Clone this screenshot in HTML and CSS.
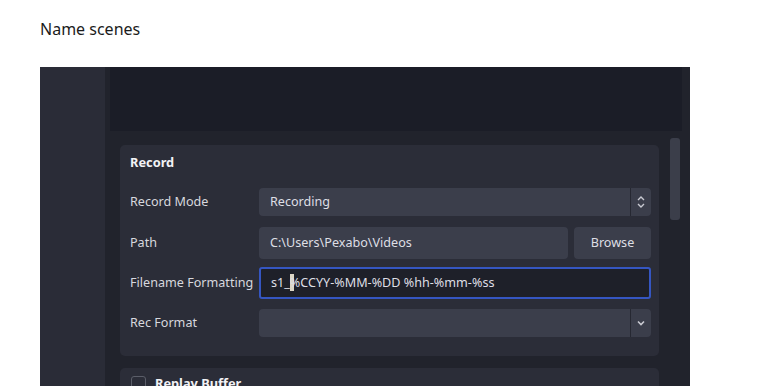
FILE: index.html
```html
<!DOCTYPE html>
<html>
<head>
<meta charset="utf-8">
<link rel="stylesheet" href="styles.css">
</head>
<body>
<div class="header"><h1 class="title">Name scenes</h1></div>
<div class="frame">
  <div class="sidebar"></div>
  <div class="main">
    <div class="toppanel"></div>
    <div class="lower">
      <div class="scroll-content">
        <div class="card">
          <div class="card-title">Record</div>
          <div class="rows">
            <div class="row first">
              <div class="label">Record Mode</div>
              <div class="select">
                <span class="select-text">Recording</span>
                <span class="select-btn">
                  <svg width="10" height="16" viewBox="0 0 10 16"><path d="M2 6 L5 3 L8 6" fill="none" stroke="#c9cad2" stroke-width="1.4"/><path d="M2 10 L5 13 L8 10" fill="none" stroke="#c9cad2" stroke-width="1.4"/></svg>
                </span>
              </div>
            </div>
            <div class="row">
              <div class="label">Path</div>
              <div class="path-group">
                <div class="input">C:\Users\Pexabo\Videos</div>
                <div class="button">Browse</div>
              </div>
            </div>
            <div class="row">
              <div class="label">Filename Formatting</div>
              <div class="input focused">s1_<span class="caret">%</span>CCYY-%MM-%DD %hh-%mm-%ss</div>
            </div>
            <div class="row">
              <div class="label">Rec Format</div>
              <div class="select">
                <span class="select-text"></span>
                <span class="select-btn">
                  <svg width="10" height="10" viewBox="0 0 10 10"><path d="M2 3.5 L5 6.5 L8 3.5" fill="none" stroke="#c9cad2" stroke-width="1.6"/></svg>
                </span>
              </div>
            </div>
          </div>
        </div>
        <div class="card card2">
          <span class="checkbox"></span>
          <span class="card-title inline">Replay Buffer</span>
        </div>
      </div>
      <div class="scroll-track"><div class="scroll-thumb"></div></div>
    </div>
  </div>
</div>
</body>
</html>
```
FILE: styles.css
```css
html, body {
  margin: 0;
  padding: 0;
  background: #ffffff;
  font-family: "Noto Sans", "Open Sans", sans-serif;
  overflow: hidden;
}
.header {
  height: 67px;
  box-sizing: border-box;
  padding: 18px 0 0 40px;
}
.title {
  margin: 0;
  font-size: 16px;
  font-weight: 400;
  line-height: 22px;
  color: #1b1b1b;
}
.frame {
  margin-left: 40px;
  width: 650px;
  height: 319px;
  display: flex;
  overflow: hidden;
}
.sidebar {
  width: 65px;
  flex: none;
  background: #2a2c37;
}
.main {
  flex: 1;
  background: #21232c;
  display: flex;
  flex-direction: column;
}
.toppanel {
  height: 64px;
  flex: none;
  margin: 0 8px 0 5px;
  background: #1b1d27;
}
.lower {
  display: flex;
  flex: 1;
}
.scroll-content {
  flex: 1;
  padding: 14px 0 0 15px;
}
.scroll-track {
  width: 10px;
  flex: none;
  margin: 7px 10px 0 11px;
}
.scroll-thumb {
  height: 82px;
  background: #3b3e4a;
  border-radius: 3px;
}
.card {
  background: #2b2d38;
  border-radius: 5px;
  padding: 8px 8px 17px 10px;
  color: #d9d9df;
  font-size: 12.6px;
}
.card-title {
  font-weight: 700;
  color: #f2f2f5;
  line-height: 18px;
  margin-bottom: 16px;
  font-size: 12.8px;
}
.rows {
  display: flex;
  flex-direction: column;
  gap: 8px;
}
.row {
  display: flex;
  align-items: center;
  height: 32px;
}
.row.first {
  margin-top: -1px;
  margin-bottom: 1px;
}
.label {
  width: 129px;
  flex: none;
  color: #d7d8de;
  padding-bottom: 1px;
}
.select {
  flex: 1;
  height: 28px;
  background: #3b3e4b;
  border-radius: 4px;
  display: flex;
  align-items: center;
}
.select-text {
  flex: 1;
  padding-left: 11px;
  padding-bottom: 1px;
  color: #dedfe5;
}
.select-btn {
  width: 20px;
  height: 28px;
  border-left: 1px solid #262832;
  display: flex;
  align-items: center;
  justify-content: center;
}
.path-group {
  flex: 1;
  display: flex;
  gap: 6px;
  height: 32px;
}
.input {
  flex: 1;
  height: 32px;
  box-sizing: border-box;
  background: #3b3e4b;
  border-radius: 4px;
  padding-left: 11px;
  padding-bottom: 1px;
  display: flex;
  align-items: center;
  color: #dedfe5;
}
.button {
  width: 77px;
  background: #3b3e4b;
  border-radius: 4px;
  display: flex;
  align-items: center;
  justify-content: center;
  padding-bottom: 1px;
  box-sizing: border-box;
  color: #dedfe5;
}
.focused {
  background: #1e2029;
  border: 2px solid #3556c2;
  padding-left: 10px;
  border-radius: 3px;
  white-space: pre;
}
.caret {
  background: linear-gradient(to right, #ddd6c6 0, #ddd6c6 4px, transparent 4px);
}
.card2 {
  margin-top: 12px;
  padding: 6px 10px 10px 11px;
  display: flex;
  align-items: center;
  gap: 9px;
}
.checkbox {
  width: 13px;
  height: 13px;
  border: 1.5px solid #5b5e69;
  border-radius: 3px;
  flex: none;
}
.card-title.inline {
  margin: 0;
}
```
